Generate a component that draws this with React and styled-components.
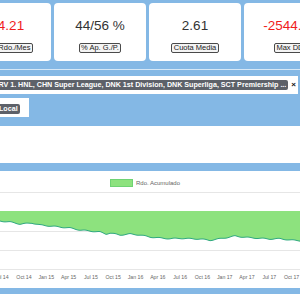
import React from "react";
import styled, { createGlobalStyle } from "styled-components";

const GlobalStyle = createGlobalStyle`
  html, body {
    margin: 0;
    background: #84b8e5;
    font-family: "Liberation Sans", Arial, sans-serif;
    overflow: hidden;
  }
`;

const stats = [
  { value: "-14.21", label: "Med. Rdo./Mes", negative: true },
  { value: "44/56 %", label: "% Ap. G./P." },
  { value: "2.61", label: "Cuota Media" },
  { value: "-2544.52", label: "Max DD", negative: true },
];

const ticks = [
  "Jul 14", "Oct 14", "Jan 15", "Apr 15", "Jul 15", "Oct 15", "Jan 16",
  "Apr 16", "Jul 16", "Oct 16", "Jan 17", "Apr 17", "Jul 17", "Oct 17",
];

// rough shape of the accumulated result, in page pixels
const shape = [
  [0, 221], [10, 222], [20, 224], [27, 223.5], [32, 223], [40, 225], [50, 226],
  [60, 227], [70, 228], [80, 230], [90, 231], [100, 232], [106, 234], [110, 233],
  [120, 235], [130, 234], [140, 235], [150, 237], [160, 238], [170, 238.7],
  [180, 238.3], [190, 238.7], [200, 239], [210, 240.3], [220, 238.7], [230, 237],
  [235, 236], [240, 236.7], [250, 237.7], [260, 238.3], [270, 239], [280, 238.7],
  [290, 240], [300, 240.7],
];

const TOP = 187;
const ZERO = 211 - TOP;

const buildLine = () => {
  const out = [];
  for (let x = 0; x <= 300; x++) {
    let i = 0;
    while (i < shape.length - 2 && shape[i + 1][0] < x) i++;
    const [x0, y0] = shape[i];
    const [x1, y1] = shape[i + 1];
    const t = (x - x0) / (x1 - x0);
    const jitter = Math.sin(x * 12.9898) * 0.45;
    out.push([x, y0 + (y1 - y0) * t - TOP + jitter]);
  }
  return out;
};

const line = buildLine();
const linePath = line.map(([x, y], i) => `${i ? "L" : "M"}${x},${y.toFixed(2)}`).join(" ");
const areaPath = `M0,${ZERO} ${line.map(([x, y]) => `L${x},${y.toFixed(2)}`).join(" ")} L300,${ZERO} Z`;

const App = () => {
  return (
    <Page>
      <GlobalStyle />
      <CardRow>
        {stats.map((s) => (
          <Card key={s.label}>
            <Value $negative={s.negative}>{s.value}</Value>
            <Label>{s.label}</Label>
          </Card>
        ))}
      </CardRow>

      <FilterPanel>
        <TagRow>
          <Tag>AUT Bundesliga, HRV 1. HNL, CHN Super League, DNK 1st Division, DNK Superliga, SCT Premiership ...</Tag>
          <Clear>×</Clear>
        </TagRow>
        <LocalBox>
          <Tag>Local</Tag>
        </LocalBox>
      </FilterPanel>

      <EmptyPanel />

      <ChartPanel>
        <Legend>
          <LegendBox />
          <LegendText>Rdo. Acumulado</LegendText>
        </Legend>
        <svg width="300" height="101" viewBox="0 0 300 101">
          {[5, 24, 44, 63, 82].map((y) => (
            <line key={y} x1="0" x2="300" y1={y + 0.5} y2={y + 0.5} stroke="#e6e6e6" strokeWidth="1" />
          ))}
          <path d={areaPath} fill="#8de27e" />
          <path d={linePath} fill="none" stroke="#2fa97f" strokeWidth="1" />
          {ticks.map((t, i) => (
            <text
              key={t}
              x={1.7 + i * 22.3}
              y="92"
              textAnchor="middle"
              fontSize="5.2"
              fill="#666"
              fontFamily="Liberation Sans, Arial, sans-serif"
            >
              {t}
            </text>
          ))}
        </svg>
      </ChartPanel>

      <NextPanel />
    </Page>
  );
};

export default App;

const Page = styled.div`
  width: 300px;
  height: 300px;
  overflow: hidden;
  background: #84b8e5;
`;

const CardRow = styled.div`
  display: flex;
  gap: 3px;
  padding-top: 3px;
  margin-left: -41px;
`;

const Card = styled.div`
  flex: none;
  width: 92px;
  height: 58px;
  box-sizing: border-box;
  padding-top: 15px;
  background: #fff;
  border-radius: 4px;
  display: flex;
  flex-direction: column;
  align-items: center;
`;

const Value = styled.div`
  font-size: 13.5px;
  line-height: 16px;
  color: ${(p) => (p.$negative ? "#f01c1c" : "#333")};
  white-space: nowrap;
`;

const Label = styled.div`
  margin-top: 9px;
  font-size: 7.5px;
  line-height: 8px;
  color: #222;
  background: #f4f4f4;
  border: 1px solid #4a4a4a;
  border-radius: 2px;
  padding: 0 1.5px;
  white-space: nowrap;
`;

const FilterPanel = styled.div`
  margin-top: 8px;
  border-top: 1px solid #d6e8f7;
  padding-top: 6px;
`;

const TagRow = styled.div`
  height: 18px;
  margin-right: 2px;
  padding-right: 2px;
  background: #fff;
  display: flex;
  align-items: center;
  justify-content: flex-end;
  overflow: hidden;
`;

const Tag = styled.span`
  flex: none;
  height: 10px;
  line-height: 10px;
  padding: 0 2px;
  background: #5d6169;
  color: #fff;
  font-size: 7.15px;
  font-weight: bold;
  border-radius: 2px;
  white-space: nowrap;
`;

const Clear = styled.span`
  flex: none;
  margin-left: 3px;
  font-size: 8px;
  line-height: 10px;
  font-weight: bold;
  color: #111;
`;

const LocalBox = styled.div`
  width: fit-content;
  margin-top: 4px;
  margin-left: -5px;
  height: 19px;
  box-sizing: border-box;
  padding: 6px 9px 3px 2px;
  background: #fff;
  display: flex;
  align-items: flex-start;
`;

const EmptyPanel = styled.div`
  margin-top: 9px;
  height: 37px;
  background: #fff;
`;

const ChartPanel = styled.div`
  margin-top: 8px;
  height: 117px;
  background: #fff;
  display: flex;
  flex-direction: column;
  overflow: hidden;
`;

const Legend = styled.div`
  height: 16px;
  box-sizing: border-box;
  padding: 8px 10px 0 0;
  display: flex;
  justify-content: center;
  align-items: flex-start;
  gap: 3px;
`;

const LegendBox = styled.span`
  width: 23px;
  height: 8px;
  box-sizing: border-box;
  background: #8de27e;
  border: 1px solid #6fd373;
`;

const LegendText = styled.span`
  font-size: 6px;
  line-height: 8px;
  color: #666;
`;

const NextPanel = styled.div`
  margin-top: 6px;
  height: 20px;
  background: #fff;
`;
